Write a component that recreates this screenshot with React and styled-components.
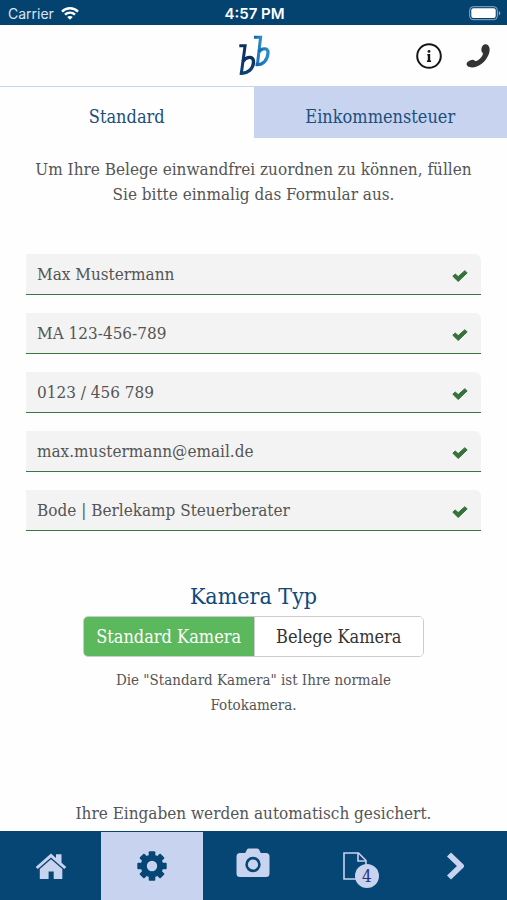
import React, { useState } from "react";
import styled, { createGlobalStyle } from "styled-components";

const navy = "#064675";
const pale = "#c8d3f0";
const slab = '"Roboto Slab", "DejaVu Serif Condensed", "DejaVu Serif", serif';

const GlobalStyle = createGlobalStyle`
  *, *::before, *::after { box-sizing: border-box; }
  body { margin: 0; background: #fefefe; color: #555; font: 17px/25px ${slab}; }
  button, input { font: inherit; color: inherit; margin: 0; }
`;

const Screen = styled.div`
  display: flex;
  flex-direction: column;
  min-height: 100vh;
`;

const StatusBar = styled.div`
  display: grid;
  grid-template-columns: 1fr auto 1fr;
  align-items: center;
  height: 25px;
  padding: 2px 6px 0 8px;
  background: #044270;
  color: #fff;
  font: 14px/20px Inter, sans-serif;
`;

const Carrier = styled.span`
  display: flex;
  align-items: center;
  gap: 7px;
  color: #dce6ee;
`;

const Clock = styled.span`
  font-size: 15px;
  font-weight: 600;
`;

const Battery = styled.svg`
  justify-self: end;
`;

const Header = styled.header`
  display: grid;
  grid-template-columns: 1fr auto 1fr;
  align-items: center;
  height: 62px;
  padding: 0 16px;
  border-bottom: 1px solid ${pale};
`;

const Logo = styled.svg`
  grid-column: 2;
  display: block;
`;

const HeaderActions = styled.div`
  display: flex;
  justify-content: flex-end;
  gap: 24px;
`;

const IconButton = styled.button`
  display: flex;
  padding: 0;
  border: 0;
  background: none;
`;

const Tabs = styled.div`
  display: grid;
  grid-template-columns: 1fr 1fr;
`;

const Tab = styled.button`
  height: 51px;
  padding: 8px 0 0;
  border: 0;
  background: ${(p) => (p.$active ? "#fefefe" : pale)};
  color: #1c4f7c;
  font-size: 18px;
`;

const Main = styled.main`
  flex: 1;
  display: flex;
  flex-direction: column;
  align-items: center;
  padding: 19px 26px 5px;
  text-align: center;
`;

const Paragraph = styled.p`
  margin: 0;
`;

const Form = styled.form`
  display: grid;
  gap: 18px;
  width: 100%;
  margin-top: 47px;
`;

const Field = styled.label`
  display: flex;
  align-items: center;
  height: 41px;
  padding: 0 13px 0 11px;
  border-bottom: 1px solid #3c763d;
  border-radius: 0 6px 0 0;
  background: #f3f3f3;
`;

const Input = styled.input`
  flex: 1;
  min-width: 0;
  padding: 0;
  border: 0;
  outline: 0;
  background: none;
`;

const Tick = styled.svg`
  margin-top: 4px;
`;

const Title = styled.h2`
  margin: 50px 0 5px;
  color: #0f4a7b;
  font-size: 23px;
  font-weight: 400;
  line-height: 30px;
`;

const Segments = styled.div`
  display: grid;
  grid-template-columns: 1fr 1fr;
  width: 75%;
  border: 1px solid #ccc;
  border-radius: 5px;
  overflow: hidden;
`;

const Segment = styled.button`
  height: 39px;
  padding: 0;
  border: 0;
  white-space: nowrap;
  background: ${(p) => (p.$active ? "#5cb85c" : "#fff")};
  color: ${(p) => (p.$active ? "#fff" : "#333")};
  font-size: 18px;

  & + & {
    border-left: 1px solid #ccc;
  }
`;

const Hint = styled.p`
  max-width: 300px;
  margin: 11px 0 0;
  font-size: 15px;
`;

const SavedNote = styled.p`
  margin: auto 0 0;
`;

const Nav = styled.nav`
  display: grid;
  grid-template-columns: repeat(5, 1fr);
  height: 69px;
  border-top: 1px solid ${navy};
  background: ${navy};
`;

const NavButton = styled.button`
  display: flex;
  align-items: center;
  justify-content: center;
  padding: 0 0 ${(p) => p.$lift || 0}px;
  border: 0;
  background: ${(p) => (p.$active ? pale : navy)};
  color: ${(p) => (p.$active ? navy : pale)};
`;

const BadgeAnchor = styled.span`
  position: relative;
  display: flex;
`;

const Badge = styled.span`
  position: absolute;
  left: 12px;
  top: 12px;
  width: 24px;
  height: 24px;
  border-radius: 50%;
  background: ${pale};
  color: #2f2f7c;
  font-size: 17px;
  line-height: 24px;
  text-align: center;
`;

const WifiIcon = () => (
  <svg width="18" height="13" viewBox="0 0 18 13" fill="none" stroke="#fff" strokeWidth="2.4" aria-hidden="true">
    <path d="M1 4.6C5.5.2 12.5.2 17 4.6M4 7.7c2.8-2.8 7.2-2.8 10 0" />
    <path d="M9 12.8 6.2 10c1.5-1.5 4.1-1.5 5.6 0z" fill="#fff" stroke="none" />
  </svg>
);

const BatteryIcon = () => (
  <Battery width="32" height="15" viewBox="0 0 32 15" aria-hidden="true">
    <rect x=".7" y=".7" width="27.6" height="13" rx="3.5" fill="none" stroke="#93adc1" />
    <rect x="2.3" y="2.3" width="24.4" height="9.8" rx="2" fill="#fff" />
    <path d="M29.8 5v4.4c2-.8 2-3.6 0-4.4z" fill="#93adc1" />
  </Battery>
);

const BrandLogo = () => (
  <Logo width="34" height="44" viewBox="0 0 34 44" fill="none" role="img" aria-label="Bode Berlekamp">
    <defs>
      <linearGradient id="front" x1="0" y1="0" x2="0" y2="1">
        <stop offset="0" stopColor="#0b2f60" />
        <stop offset="1" stopColor="#0a4272" />
      </linearGradient>
      <linearGradient id="back" x1="0" y1="0" x2="1" y2="0">
        <stop offset="0" stopColor="#0c5fab" />
        <stop offset="1" stopColor="#2b8bca" />
      </linearGradient>
    </defs>
    <g stroke="url(#back)">
      <path d="M17 3.300h6.600L20.400 31" strokeWidth="3" />
      <path d="M22 18c2-3.500 9.400-5.500 9 1.200-.4 6.400-4.400 12-12.400 11.300" strokeWidth="3.200" />
    </g>
    <g stroke="url(#front)">
      <path d="M2.300 11.800h5.800L4.300 39.500" strokeWidth="3" />
      <path d="M6 27.400c2.500-4.400 10.600-6.400 10.500.4-.1 7-6 12.500-13.700 11.300" strokeWidth="3.400" />
    </g>
  </Logo>
);

const InfoIcon = () => (
  <svg width="26" height="26" viewBox="0 0 26 26" aria-hidden="true">
    <circle cx="13" cy="13" r="11.8" fill="none" stroke="#151515" strokeWidth="2" />
    <circle cx="13" cy="8.4" r="1.400" fill="#151515" />
    <path d="M11.300 11h2.900v6.500h.9V19h-4.200v-1.500h.9v-5h-.5z" fill="#151515" />
  </svg>
);

const PhoneIcon = () => (
  <svg width="25" height="26" viewBox="0 0 25 26" aria-hidden="true">
    <path
      d="M16.500 3c1-1.700 3.600-2.200 5.300-1 1.900 1.500 2.300 4.500 1.500 7.500-1.500 5.900-6.600 11.800-12.500 14-3.400 1.300-7.200 1.300-9.300-.5-1.300-1.200-1.200-3 0-4 1.300-1.100 3.500-2.200 5.200-2.300 1.900-.1 2 1.600 3.400 1.300 2.800-.7 6.200-4.300 6.800-7.100.2-1.300-1.300-1.800-1.500-3.200-.2-1.600.2-3.300 1.100-4.700z"
      fill="#333"
    />
  </svg>
);

const TickIcon = () => (
  <Tick width="16" height="12" viewBox="0 0 16 12" aria-hidden="true">
    <path d="M.8 6.2 3.2 4l3 2.6L12.8.7l2.4 2.2-9 8.6z" fill="#35733a" stroke="#35733a" strokeLinejoin="round" />
  </Tick>
);

const HomeIcon = () => (
  <svg width="32" height="27" viewBox="0 0 32 27" fill="currentColor" aria-hidden="true">
    <path d="M16 .6 21 5V1.300h5.500v8.400l4.800 4.200-2 2.200L16 4.600 2.700 16.100l-2-2.200z" />
    <path d="m16 6.200 11.300 9.700V26h-8.600v-7.600h-5.100V26H4.800V15.900z" />
  </svg>
);

const GearIcon = () => (
  <svg width="30" height="30" viewBox="-15 -15 30 30" fill="currentColor" aria-hidden="true">
    {[0, 45, 90, 135].map((a) => (
      <rect key={a} x="-3.3" y="-14.7" width="6.6" height="29.4" rx="1" transform={`rotate(${a})`} />
    ))}
    <circle r="11.2" />
    <circle r="5.2" fill={pale} />
  </svg>
);

const CameraIcon = () => (
  <svg width="34" height="30" viewBox="0 0 34 30" aria-hidden="true">
    <path d="M4 5h5.200l1.800-3.500Q11.600.5 13 .5h8q1.400 0 2 1L24.800 5H30q3.500 0 3.500 3.500v17Q33.500 29 30 29H4Q.5 29 .5 25.500v-17Q.5 5 4 5z" fill="currentColor" />
    <circle cx="17" cy="16.500" r="6.400" fill="none" stroke={navy} strokeWidth="2.600" />
  </svg>
);

const DocumentIcon = () => (
  <svg width="24" height="28" viewBox="0 0 24 28" fill="none" stroke="currentColor" strokeWidth="1.600" aria-hidden="true">
    <path d="M1 1h14.500L23 8.500V27H1z" />
    <path d="M15 1v8h8" />
  </svg>
);

const ChevronIcon = () => (
  <svg width="20" height="28" viewBox="0 0 20 28" fill="none" stroke="currentColor" strokeWidth="5.800" strokeLinejoin="round" aria-hidden="true">
    <path d="m3 2.500 12 11.500L3 25.500" />
  </svg>
);

const fields = [
  { label: "Name", type: "text", value: "Max Mustermann" },
  { label: "Mandantennummer", type: "text", value: "MA 123-456-789" },
  { label: "Telefon", type: "tel", value: "0123 / 456 789" },
  { label: "E-Mail", type: "email", value: "max.mustermann@email.de" },
  { label: "Kanzlei", type: "text", value: "Bode | Berlekamp Steuerberater" },
];

export default function App() {
  const [tab, setTab] = useState("Standard");
  const [camera, setCamera] = useState("Standard Kamera");

  return (
    <Screen>
      <GlobalStyle />
      <StatusBar>
        <Carrier>Carrier <WifiIcon /></Carrier>
        <Clock>4:57 PM</Clock>
        <BatteryIcon />
      </StatusBar>
      <Header>
        <BrandLogo />
        <HeaderActions>
          <IconButton aria-label="Information"><InfoIcon /></IconButton>
          <IconButton aria-label="Anrufen"><PhoneIcon /></IconButton>
        </HeaderActions>
      </Header>
      <Tabs role="tablist">
        {["Standard", "Einkommensteuer"].map((name) => (
          <Tab key={name} role="tab" aria-selected={tab === name} $active={tab === name} onClick={() => setTab(name)}>
            {name}
          </Tab>
        ))}
      </Tabs>
      <Main>
        <Paragraph>Um Ihre Belege einwandfrei zuordnen zu können, füllen Sie bitte einmalig das Formular aus.</Paragraph>
        <Form>
          {fields.map((f) => (
            <Field key={f.label}>
              <Input type={f.type} aria-label={f.label} defaultValue={f.value} />
              <TickIcon />
            </Field>
          ))}
        </Form>
        <Title>Kamera Typ</Title>
        <Segments>
          {["Standard Kamera", "Belege Kamera"].map((name) => (
            <Segment key={name} aria-pressed={camera === name} $active={camera === name} onClick={() => setCamera(name)}>
              {name}
            </Segment>
          ))}
        </Segments>
        <Hint>Die "Standard Kamera" ist Ihre normale Fotokamera.</Hint>
        <SavedNote>Ihre Eingaben werden automatisch gesichert.</SavedNote>
      </Main>
      <Nav>
        <NavButton aria-label="Startseite"><HomeIcon /></NavButton>
        <NavButton aria-label="Einstellungen" $active><GearIcon /></NavButton>
        <NavButton aria-label="Kamera" $lift={6}><CameraIcon /></NavButton>
        <NavButton aria-label="Belege">
          <BadgeAnchor>
            <DocumentIcon />
            <Badge>4</Badge>
          </BadgeAnchor>
        </NavButton>
        <NavButton aria-label="Weiter"><ChevronIcon /></NavButton>
      </Nav>
    </Screen>
  );
}
